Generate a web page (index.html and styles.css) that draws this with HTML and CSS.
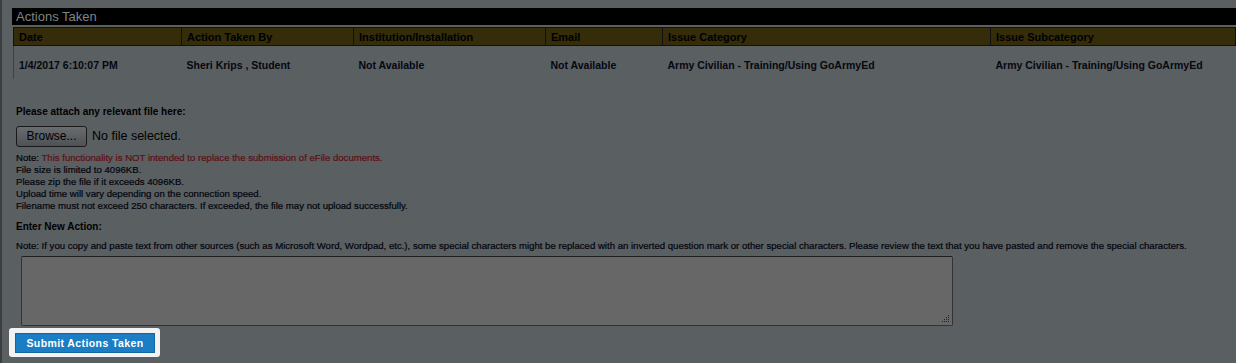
FILE: index.html
```html
<html>
<head>
  <title>Actions Taken</title>
  <link rel="stylesheet" href="styles.css">
</head>
<body>

  <div id="page">
    <div id="panel">
      <div class="panel-title">Actions Taken</div>
      <table class="actions">
        <colgroup>
          <col style="width:168px">
          <col style="width:172px">
          <col style="width:192px">
          <col style="width:117px">
          <col style="width:328px">
          <col>
        </colgroup>
        <tr class="head">
          <th>Date</th>
          <th>Action Taken By</th>
          <th>Institution/Installation</th>
          <th>Email</th>
          <th>Issue Category</th>
          <th>Issue Subcategory</th>
        </tr>
        <tr class="row">
          <td>1/4/2017 6:10:07 PM</td>
          <td>Sheri Krips , Student</td>
          <td>Not Available</td>
          <td>Not Available</td>
          <td>Army Civilian - Training/Using GoArmyEd</td>
          <td>Army Civilian - Training/Using GoArmyEd</td>
        </tr>
      </table>
    </div>

    <div id="form">
      <div class="label">Please attach any relevant file here:</div>
      <div class="file-row">
        <span class="browse">Browse...</span>
        <span class="file-name">No file selected.</span>
      </div>
      <div class="notes">
        <div>Note: <span class="warn">This functionality is NOT intended to replace the submission of eFile documents.</span></div>
        <div>File size is limited to 4096KB.</div>
        <div>Please zip the file if it exceeds 4096KB.</div>
        <div>Upload time will vary depending on the connection speed.</div>
        <div>Filename must not exceed 250 characters. If exceeded, the file may not upload successfully.</div>
      </div>

      <div class="label label-action">Enter New Action:</div>
      <div class="notes paste-note">Note: If you copy and paste text from other sources (such as Microsoft Word, Wordpad, etc.), some special characters might be replaced with an inverted question mark or other special characters. Please review the text that you have pasted and remove the special characters.</div>
      <div class="area">
        <svg class="grip" width="9" height="9" viewBox="0 0 9 9">
          <rect x="7" y="1" width="1" height="1" fill="#222"/>
          <rect x="5" y="3" width="1" height="1" fill="#222"/>
          <rect x="7" y="3" width="1" height="1" fill="#222"/>
          <rect x="3" y="5" width="1" height="1" fill="#222"/>
          <rect x="5" y="5" width="1" height="1" fill="#222"/>
          <rect x="7" y="5" width="1" height="1" fill="#222"/>
          <rect x="1" y="7" width="1" height="1" fill="#222"/>
          <rect x="3" y="7" width="1" height="1" fill="#222"/>
          <rect x="5" y="7" width="1" height="1" fill="#222"/>
          <rect x="7" y="7" width="1" height="1" fill="#222"/>
        </svg>
      </div>

      <div class="spotlight">
        <span class="submit">Submit Actions Taken</span>
      </div>
    </div>
  </div>

</body>
</html>
```

FILE: styles.css
```css
body {
  margin: 0;
  background-color: #5a5f62;
  font-family: "Liberation Sans", Arial, sans-serif;
  overflow: hidden;
}

#page {
  height: 363px;
  border-left: 2px solid #3b3e40;
}

#panel {
  padding: 8px 0 0 10px;
}

.panel-title {
  height: 17px;
  background-color: #000;
  color: #7f8487;
  font-size: 13px;
  line-height: 17px;
  padding-left: 4px;
}

.actions {
  margin-top: 2px;
  margin-left: 1px;
  width: 1223px;
  table-layout: fixed;
  border-collapse: collapse;
  font-size: 10.5px;
  font-weight: bold;
}

.actions th {
  background-color: #352c0a;
  color: #000;
  font-size: 11px;
  text-align: left;
  height: 18px;
  padding: 1px 5px 0 5px;
  border: 1px solid #111;
  white-space: nowrap;
}

.actions td {
  height: 33px;
  padding: 5px 5px 0 5px;
  color: #05080f;
  white-space: nowrap;
}

.actions td:first-child {
  border-left: 1px solid #4a4418;
}

#form {
  padding: 27px 0 0 14px;
}

.label {
  font-size: 10px;
  font-weight: bold;
  color: #000;
  line-height: 12px;
}

.file-row {
  display: flex;
  align-items: center;
  gap: 5px;
  margin-top: 8px;
  height: 21px;
}

.browse {
  box-sizing: border-box;
  width: 71px;
  height: 21px;
  line-height: 19px;
  text-align: center;
  font-size: 12px;
  color: #000;
  border: 1px solid #1a1a1a;
  border-radius: 3px;
  background: linear-gradient(#6a6d6f, #4f5254);
}

.file-name {
  font-size: 12.5px;
  color: #000;
}

.notes {
  margin-top: 5px;
  font-size: 9.6px;
  line-height: 12px;
  color: #02040c;
  -webkit-text-stroke: 0.2px #02040c;
}

.warn {
  color: #5f0f12;
  -webkit-text-stroke: 0.2px #5f0f12;
}

.label-action {
  margin-top: 9px;
}

.paste-note {
  margin-top: 7px;
}

.area {
  position: relative;
  box-sizing: border-box;
  width: 932px;
  height: 70px;
  margin: 4px 0 0 5px;
  background-color: #676767;
  border: 1px solid #333;
  border-top-color: #1e1e1e;
  border-radius: 2px;
}

.grip {
  position: absolute;
  right: 2px;
  bottom: 2px;
}

.spotlight {
  display: inline-block;
  margin: 2px 0 0 -7px;
  padding: 5px 5px 4px 6px;
  background-color: #f2f2f2;
  border-radius: 3px;
}

.submit {
  display: block;
  box-sizing: border-box;
  width: 140px;
  height: 20px;
  line-height: 18px;
  text-align: center;
  background-color: #1b7dc4;
  border: 1px solid #15669f;
  color: #fff;
  font-size: 10.5px;
  font-weight: bold;
  letter-spacing: 0.4px;
}
```
